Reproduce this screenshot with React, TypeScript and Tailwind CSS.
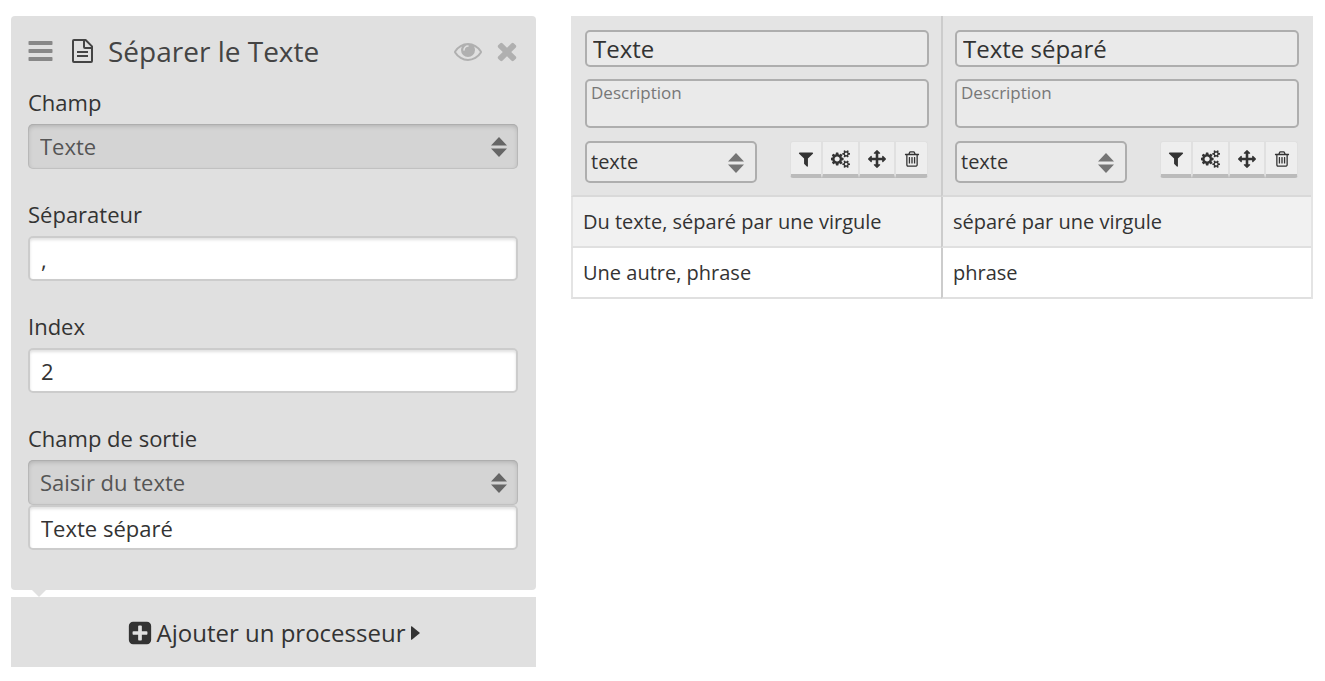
import React from "react";

type IconProps = { className?: string };

type GlyphProps = { d: string; className?: string; left?: number; width?: number };

function Glyph({ d, className = "", left = 0, width = 1792 }: GlyphProps) {
  return (
    <svg viewBox={`${left} 0 ${width} 1792`} fill="currentColor" aria-hidden="true" className={className}>
      <path d={d} />
    </svg>
  );
}

const BarsIcon = ({ className }: IconProps) => (
  <svg viewBox="0 0 24 20" fill="currentColor" aria-hidden="true" className={className}>
    <rect x="0" y="0" width="24" height="4" rx="0.8" />
    <rect x="0" y="8" width="24" height="4" rx="0.8" />
    <rect x="0" y="16" width="24" height="4" rx="0.8" />
  </svg>
);

const FileIcon = ({ className }: IconProps) => (
  <svg viewBox="0 0 21 24" fill="none" stroke="currentColor" strokeWidth="2" strokeLinejoin="round" aria-hidden="true" className={className}>
    <path d="M1 1.9Q1 1 1.9 1H13.6L20 7.4V22.1Q20 23 19.1 23H1.9Q1 23 1 22.1Z" />
    <path d="M12 1V8Q12 9 13 9H20" />
    <path d="M5 13H16M5 17H16" />
  </svg>
);

const EyeIcon = ({ className }: IconProps) => (
  <Glyph
    className={className}
    d="M1664 960q-152-236-381-353 61 104 61 225 0 185-131.5 316.5t-316.5 131.5-316.5-131.5-131.5-316.5q0-121 61-225-229 117-381 353 133 205 333.5 326.5t434.5 121.5 434.5-121.5 333.5-326.5zm-720-384q0-20-14-34t-34-14q-125 0-214.5 89.5t-89.5 214.5q0 20 14 34t34 14 34-14 14-34q0-86 61-147t147-61q20 0 34-14t14-34zm848 384q0 34-20 69-140 230-376.5 368.5t-499.5 138.5-499.5-139-376.5-368q-20-35-20-69t20-69q140-229 376.5-368t499.5-139 499.5 139 376.5 368q20 35 20 69z"
  />
);

const TimesIcon = ({ className }: IconProps) => (
  <Glyph
    className={className}
    left={192}
    width={1408}
    d="M1490 1322q0 40-28 68l-136 136q-28 28-68 28t-68-28l-294-294-294 294q-28 28-68 28t-68-28l-136-136q-28-28-28-68t28-68l294-294-294-294q-28-28-28-68t28-68l136-136q28-28 68-28t68 28l294 294 294-294q28-28 68-28t68 28l136 136q28 28 28 68t-28 68l-294 294 294 294q28 28 28 68z"
  />
);

const PlusSquareIcon = ({ className }: IconProps) => (
  <Glyph
    className={className}
    d="M1408 960v-128q0-26-19-45t-45-19h-320v-320q0-26-19-45t-45-19h-128q-26 0-45 19t-19 45v320h-320q-26 0-45 19t-19 45v128q0 26 19 45t45 19h320v320q0 26 19 45t45 19h128q26 0 45-19t19-45v-320h320q26 0 45-19t19-45zm256-544v960q0 119-84.5 203.5t-203.5 84.5h-960q-119 0-203.5-84.5t-84.5-203.5v-960q0-119 84.5-203.5t203.5-84.5h960q119 0 203.5 84.5t84.5 203.5z"
  />
);

const FilterIcon = ({ className }: IconProps) => (
  <Glyph
    className={className}
    d="M1595 295q17 41-14 70l-493 493v742q0 42-39 59-13 5-25 5-27 0-45-19l-256-256q-19-19-19-45v-486l-493-493q-31-29-14-70 17-39 59-39h1280q42 0 59 39z"
  />
);

const CogsIcon = ({ className }: IconProps) => (
  <Glyph
    className={className}
    width={1920}
    d="M832 896q0-106-75-181t-181-75-181 75-75 181 75 181 181 75 181-75 75-181zm768 512q0-52-38-90t-90-38-90 38-38 90q0 53 37.5 90.5t90.5 37.5 90.5-37.5 37.5-90.5zm0-1024q0-52-38-90t-90-38-90 38-38 90q0 53 37.5 90.5t90.5 37.5 90.5-37.5 37.5-90.5zm-384 421v185q0 10-7 19.5t-16 10.5l-155 24q-11 35-32 76 34 48 90 115 7 10 7 20 0 12-7 19-23 30-82.5 89.5t-78.5 59.5q-11 0-21-7l-115-90q-37 19-77 31-11 108-23 155-7 24-30 24h-186q-11 0-20-7.5t-10-17.5l-23-153q-34-10-75-31l-118 89q-7 7-20 7-11 0-21-8-144-133-144-160 0-9 7-19 10-14 41-53t47-61q-23-44-35-82l-152-24q-10-1-17-9.5t-7-19.5v-185q0-10 7-19.5t16-10.5l155-24q11-35 32-76-34-48-90-115-7-11-7-20 0-12 7-20 22-30 82-89t79-59q11 0 21 7l115 90q34-18 77-32 11-108 23-154 7-24 30-24h186q11 0 20 7.5t10 17.5l23 153q34 10 75 31l118-89q8-7 20-7 11 0 21 8 144 133 144 160 0 9-7 19-12 16-42 54t-45 60q23 48 34 82l152 23q10 2 17 10.5t7 19.5zm640 533v140q0 16-149 31-12 27-30 52 51 113 51 138 0 4-4 7-122 71-124 71-8 0-46-47t-52-68q-20 2-30 2t-30-2q-14 21-52 68t-46 47q-2 0-124-71-4-3-4-7 0-25 51-138-18-25-30-52-149-15-149-31v-140q0-16 149-31 13-29 30-52-51-113-51-138 0-4 4-7 4-2 35-20t59-34 30-16q8 0 46 46.5t52 67.5q20-2 30-2t30 2q51-71 92-112l6-2q4 0 124 70 4 3 4 7 0 25-51 138 17 23 30 52 149 15 149 31zm0-1024v140q0 16-149 31-12 27-30 52 51 113 51 138 0 4-4 7-122 71-124 71-8 0-46-47t-52-68q-20 2-30 2t-30-2q-14 21-52 68t-46 47q-2 0-124-71-4-3-4-7 0-25 51-138-18-25-30-52-149-15-149-31v-140q0-16 149-31 13-29 30-52-51-113-51-138 0-4 4-7 4-2 35-20t59-34 30-16q8 0 46 46.5t52 67.5q20-2 30-2t30 2q51-71 92-112l6-2q4 0 124 70 4 3 4 7 0 25-51 138 17 23 30 52 149 15 149 31z"
  />
);

const ArrowsIcon = ({ className }: IconProps) => (
  <Glyph
    className={className}
    d="M1792 896q0 26-19 45l-256 256q-19 19-45 19t-45-19-19-45v-128h-384v384h128q26 0 45 19t19 45-19 45l-256 256q-19 19-45 19t-45-19l-256-256q-19-19-19-45t19-45 45-19h128v-384h-384v128q0 26-19 45t-45 19-45-19l-256-256q-19-19-19-45t19-45l256-256q19-19 45-19t45 19 19 45v128h384v-384h-128q-26 0-45-19t-19-45 19-45l256-256q19-19 45-19t45 19l256 256q19 19 19 45t-19 45-45 19h-128v384h384v-128q0-26 19-45t45-19 45 19l256 256q19 19 19 45z"
  />
);

const TrashIcon = ({ className }: IconProps) => (
  <Glyph
    className={className}
    d="M704 736v576q0 14-9 23t-23 9h-64q-14 0-23-9t-9-23v-576q0-14 9-23t23-9h64q14 0 23 9t9 23zm256 0v576q0 14-9 23t-23 9h-64q-14 0-23-9t-9-23v-576q0-14 9-23t23-9h64q14 0 23 9t9 23zm256 0v576q0 14-9 23t-23 9h-64q-14 0-23-9t-9-23v-576q0-14 9-23t23-9h64q14 0 23 9t9 23zm128 724v-948h-896v948q0 22 7 40.5t14.5 27 10.5 8.5h832q3 0 10.5-8.5t14.5-27 7-40.5zm-672-1076h448l-48-117q-7-9-17-11h-317q-10 2-17 11zm928 32v64q0 14-9 23t-23 9h-96v948q0 83-47 143.5t-113 60.5h-832q-66 0-113-58.5t-47-141.5v-952h-96q-14 0-23-9t-9-23v-64q0-14 9-23t23-9h309l70-167q15-37 54-63t79-26h320q40 0 79 26t54 63l70 167h309q14 0 23 9t9 23z"
  />
);

const SortArrows = ({ className }: IconProps) => (
  <svg viewBox="0 0 16 20" fill="currentColor" aria-hidden="true" className={className}>
    <path d="M8 0L16 8.5H0ZM8 20L16 11.5H0Z" />
  </svg>
);

const labelClass = "block text-[22px] leading-7 mb-2";
const inputClass =
  "block w-full h-[45px] px-[11px] text-[22px] bg-white border-2 border-[#ccc] rounded-[5px] shadow-[inset_0_2px_3px_rgba(0,0,0,0.12)] outline-none";

function PanelSelect({ id, value }: { id: string; value: string }) {
  return (
    <div className="relative">
      <select
        id={id}
        defaultValue={value}
        className="block w-full h-[45px] appearance-none pl-3 pr-10 text-[22px] text-[#555] bg-[#d4d4d4] rounded-[5px] shadow-[inset_0_0_0_1px_rgba(0,0,0,0.06),inset_0_2px_5px_rgba(0,0,0,0.18)] outline-none"
      >
        <option>{value}</option>
      </select>
      <SortArrows className="pointer-events-none absolute right-[11px] top-[13px] w-4 h-5 text-[#666]" />
    </div>
  );
}

const tools = [
  { label: "Filtrer", Icon: FilterIcon, box: "w-8 rounded-l-[3px]", icon: "size-[18px]" },
  { label: "Paramètres", Icon: CogsIcon, box: "w-[37px]", icon: "w-[20px] h-[18px]" },
  { label: "Déplacer", Icon: ArrowsIcon, box: "w-9", icon: "size-[18px]" },
  { label: "Supprimer", Icon: TrashIcon, box: "w-[33px] rounded-r-[3px]", icon: "size-[18px]" },
];

function ColumnHeader({ id, name }: { id: string; name: string }) {
  const field = "bg-[#eaeaea] border-2 border-[#aeaeae] rounded-[5px] outline-none";
  return (
    <div className="px-3 pt-3.5 pb-3">
      <input
        id={`${id}-name`}
        aria-label="Nom de la colonne"
        defaultValue={name}
        className={`block w-full h-[37px] px-1.5 mb-3 text-[24px] ${field}`}
      />
      <textarea
        id={`${id}-description`}
        aria-label="Description"
        placeholder="Description"
        className={`block w-full h-[49px] px-1 py-0 mb-[13px] text-[17px] leading-6 resize-none placeholder:text-[#777] ${field}`}
      />
      <div className="flex justify-between items-start">
        <div className="relative w-1/2">
          <select
            id={`${id}-type`}
            aria-label="Type"
            defaultValue="texte"
            className={`block w-full h-[42px] appearance-none pl-1 pr-8 text-[20px] ${field}`}
          >
            <option>texte</option>
          </select>
          <SortArrows className="pointer-events-none absolute right-[13px] top-3 w-4 h-5 text-[#757575]" />
        </div>
        <div className="flex mr-px">
          {tools.map(({ label, Icon, box, icon }) => (
            <button
              key={label}
              type="button"
              aria-label={label}
              className={`flex h-[37px] items-center justify-center pt-0.5 bg-[#eee] border border-[#e0e0e0] border-b-4 border-b-[#bbb] ${box}`}
            >
              <Icon className={icon} />
            </button>
          ))}
        </div>
      </div>
    </div>
  );
}

const rows = [
  ["Du texte, séparé par une virgule", "séparé par une virgule"],
  ["Une autre, phrase", "phrase"],
];

export default function App() {
  return (
    <main className="grid grid-cols-[525fr_742fr] items-start gap-[35px] pt-4 pl-[11px] pr-3 pb-3.5 text-[#333] font-['Open_Sans',sans-serif]">
      <div>
        <section className="relative bg-[#e0e0e0] rounded pl-[17px] pr-[18px] pt-[18px] pb-10 mb-[7px]">
          <header className="flex items-center h-[34px] mb-5">
            <button type="button" aria-label="Réordonner" className="text-[#888]">
              <BarsIcon className="w-[25px] h-5" />
            </button>
            <FileIcon className="w-[21px] h-6 ml-[19px] text-[#444]" />
            <h2 className="ml-[15px] text-[28px] leading-[34px] text-[#444]">Séparer le Texte</h2>
            <div className="ml-auto flex items-center gap-3.5 text-[#b0b0b0]">
              <button type="button" aria-label="Aperçu">
                <EyeIcon className="size-7" />
              </button>
              <button type="button" aria-label="Fermer">
                <TimesIcon className="w-[22px] h-7" />
              </button>
            </div>
          </header>
          <div className="flex flex-col gap-[31px]">
            <div>
              <label htmlFor="champ" className={labelClass}>Champ</label>
              <PanelSelect id="champ" value="Texte" />
            </div>
            <div>
              <label htmlFor="separateur" className={labelClass}>Séparateur</label>
              <input id="separateur" defaultValue="," className={inputClass} />
            </div>
            <div>
              <label htmlFor="index" className={labelClass}>Index</label>
              <input id="index" defaultValue="2" className={inputClass} />
            </div>
            <div>
              <label htmlFor="sortie" className={labelClass}>Champ de sortie</label>
              <PanelSelect id="sortie" value="Saisir du texte" />
              <input aria-label="Nom du champ de sortie" defaultValue="Texte séparé" className={inputClass} />
            </div>
          </div>
          <svg viewBox="0 0 14 7" aria-hidden="true" className="absolute left-[21px] top-full w-3.5 h-[7px] text-[#e0e0e0]">
            <path d="M0 0H14L7 7Z" fill="currentColor" />
          </svg>
        </section>
        <button type="button" className="flex w-full h-[70px] items-center justify-center pt-0.5 bg-[#e0e0e0] text-[24px]">
          <PlusSquareIcon className="size-[26px] mr-1" />
          Ajouter un processeur
          <svg viewBox="0 0 9 14" fill="currentColor" aria-hidden="true" className="ml-1.5 w-[9px] h-3.5">
            <path d="M0 0.8Q0 0 0.8 0.3L9 7L0.8 13.7Q0 14 0 13.2Z" />
          </svg>
        </button>
      </div>

      <table className="w-full table-fixed border-separate border-spacing-0 border-r-2 border-[#e4e4e4]">
        <thead>
          <tr className="bg-[#e4e4e4]">
            <th className="p-0 text-left font-normal border-l-2 border-l-[#e4e4e4] border-b-2 border-b-[#d9d9d9]">
              <ColumnHeader id="texte" name="Texte" />
            </th>
            <th className="p-0 text-left font-normal border-l-2 border-l-[#ccc] border-b-2 border-b-[#d9d9d9]">
              <ColumnHeader id="texte-separe" name="Texte séparé" />
            </th>
          </tr>
        </thead>
        <tbody className="text-[20px] leading-[49px]">
          {rows.map(([source, result]) => (
            <tr key={source} className="odd:bg-[#f1f1f1] even:bg-white">
              <td className="py-0 px-2.5 border-l-2 border-l-[#e4e4e4] border-b-2 border-b-[#e0e0e0]">{source}</td>
              <td className="py-0 px-2.5 border-l-2 border-l-[#ccc] border-b-2 border-b-[#e0e0e0]">{result}</td>
            </tr>
          ))}
        </tbody>
      </table>
    </main>
  );
}
